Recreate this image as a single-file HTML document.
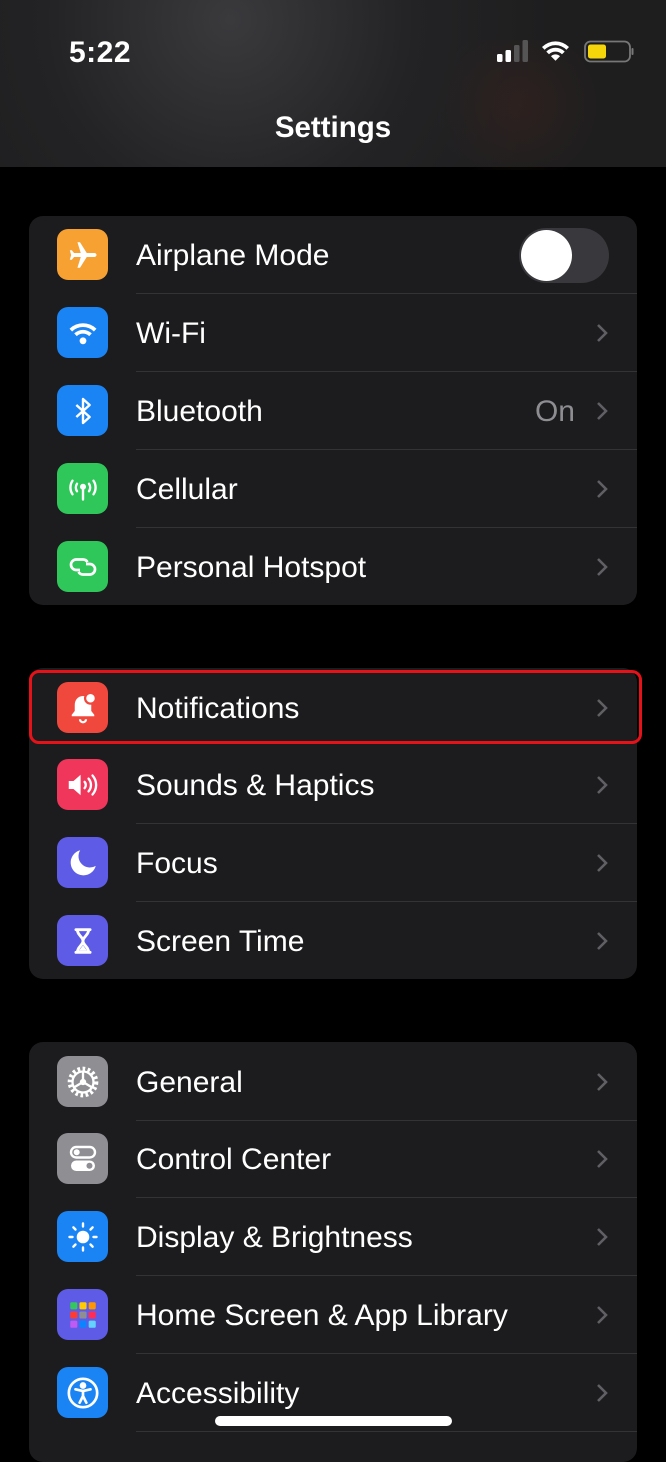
<!DOCTYPE html>
<html><head><meta charset="utf-8"><style>
*{margin:0;padding:0;box-sizing:border-box}
body{width:666px;height:1440px;background:#000;position:relative;overflow:hidden;font-family:"Liberation Sans",sans-serif;color:#fff}
.hdr{position:absolute;left:0;top:0;width:666px;height:167px;background:radial-gradient(circle at 230px 20px,#3a3a3d 0,#232325 40%,#1e1e1f 70%),#1e1e1f}
.hdr2{position:absolute;left:420px;top:40px;width:200px;height:130px;background:radial-gradient(circle,rgba(60,35,30,.5),rgba(0,0,0,0) 70%)}
.time{position:absolute;left:69px;top:36px;font-size:30px;font-weight:bold;letter-spacing:.5px}
.title{position:absolute;left:0;width:666px;text-align:center;top:111px;font-size:29.5px;font-weight:bold}
.grp{position:absolute;left:29px;width:608px;background:#1c1c1e;border-radius:14px}
.row{position:absolute;left:0;width:608px;height:78px}
.ic{position:absolute;left:28px;top:13px;width:51px;height:51px;border-radius:11px;display:flex;align-items:center;justify-content:center}
.lbl{position:absolute;left:107px;top:1px;line-height:78px;font-size:30px}
.sep{position:absolute;left:107px;right:0;bottom:0;height:1px;background:#333336}
.chev{position:absolute;left:566px;top:29px}
.val{position:absolute;right:62px;top:1px;line-height:78px;font-size:30px;color:#8d8d92}
</style></head><body>
<div class="hdr"></div><div class="hdr2"></div>
<div class="time">5:22</div>
<svg style="position:absolute;left:496px;top:39px" width="140" height="26" viewBox="0 0 140 26">
<rect x="1" y="15" width="5.5" height="8" rx="1.5" fill="#fff"/><rect x="9.5" y="11" width="5.5" height="12" rx="1.5" fill="#fff"/><rect x="18" y="6" width="5.5" height="17" rx="1.5" fill="#555"/><rect x="26.5" y="1" width="5.5" height="22" rx="1.5" fill="#555"/>
<path d="M46 8a19 19 0 0 1 27 0l-2.6 2.7a15.3 15.3 0 0 0-21.8 0z" fill="#fff"/><path d="M50.3 12.6a13 13 0 0 1 18.4 0l-2.7 2.7a9.2 9.2 0 0 0-13 0z" fill="#fff"/><path d="M55 17.2a6.5 6.5 0 0 1 9 0l-4.5 4.5z" fill="#fff"/>
<rect x="89" y="2.5" width="45" height="20" rx="5.5" fill="none" stroke="#777" stroke-width="1.8"/><rect x="92" y="5.5" width="18" height="14" rx="2.5" fill="#f5d60a"/><rect x="135.5" y="9" width="2" height="7" rx="1" fill="#777"/>
</svg>
<div class="title">Settings</div>

<div class="grp" style="top:216px;height:389px">
 <div class="row" style="top:0"><div class="ic" style="background:#f7a133"><svg width="36" height="36" viewBox="0 0 24 24"><path d="M21 12c0-.8-.7-1.3-1.5-1.3h-5L10 3.5H8.3l2.2 7.2H6L4.6 8.8H3.2l.9 3.2-.9 3.2h1.4L6 13.3h4.5l-2.2 7.2H10l4.5-7.2h5c.8 0 1.5-.5 1.5-1.3z" fill="#fff"/></svg></div><div class="lbl">Airplane Mode</div>
  <div style="position:absolute;left:490px;top:12px;width:90px;height:55px;border-radius:28px;background:#39393d"><div style="position:absolute;left:2px;top:2px;width:51px;height:51px;border-radius:50%;background:#fff"></div></div><div class="sep"></div></div>
 <div class="row" style="top:78px"><div class="ic" style="background:#1a84f5"><svg width="34" height="34" viewBox="0 0 24 24"><path d="M2.5 9a13.5 13.5 0 0 1 19 0l-1.8 1.9a11 11 0 0 0-15.4 0z" fill="#fff"/><path d="M5.8 12.3a9 9 0 0 1 12.4 0l-1.8 1.9a6.4 6.4 0 0 0-8.8 0z" fill="#fff"/><circle cx="12" cy="17.5" r="2.4" fill="#fff"/></svg></div><div class="lbl">Wi-Fi</div><svg class="chev" width="14" height="20" viewBox="0 0 14 20"><path d="M3 2l8 8-8 8" fill="none" stroke="#5f5f64" stroke-width="2.6"/></svg><div class="sep"></div></div>
 <div class="row" style="top:156px"><div class="ic" style="background:#1a84f5"><svg width="32" height="32" viewBox="0 0 24 24"><path d="M7 7.5l10 9-5 4.5V3l5 4.5-10 9" fill="none" stroke="#fff" stroke-width="1.8" stroke-linejoin="round"/></svg></div><div class="lbl">Bluetooth</div><div class="val">On</div><svg class="chev" width="14" height="20" viewBox="0 0 14 20"><path d="M3 2l8 8-8 8" fill="none" stroke="#5f5f64" stroke-width="2.6"/></svg><div class="sep"></div></div>
 <div class="row" style="top:234px"><div class="ic" style="background:#30c75a"><svg width="36" height="36" viewBox="0 0 24 24" fill="none" stroke="#fff" stroke-width="1.6" stroke-linecap="round"><path d="M5 6.5a8 8 0 0 0 0 9M19 6.5a8 8 0 0 1 0 9M8 8.5a4.5 4.5 0 0 0 0 5M16 8.5a4.5 4.5 0 0 1 0 5M12 11v8"/><circle cx="12" cy="10.5" r="1.2" fill="#fff"/></svg></div><div class="lbl">Cellular</div><svg class="chev" width="14" height="20" viewBox="0 0 14 20"><path d="M3 2l8 8-8 8" fill="none" stroke="#5f5f64" stroke-width="2.6"/></svg><div class="sep"></div></div>
 <div class="row" style="top:312px"><div class="ic" style="background:#30c75a"><svg width="36" height="36" viewBox="0 0 24 24" fill="none" stroke="#fff" stroke-width="1.8"><path d="M10 14H7.5a3.5 3.5 0 0 1 0-7H12a3.5 3.5 0 0 1 3 1.7"/><path d="M14 10h2.5a3.5 3.5 0 0 1 0 7H12a3.5 3.5 0 0 1-3-1.7"/></svg></div><div class="lbl">Personal Hotspot</div><svg class="chev" width="14" height="20" viewBox="0 0 14 20"><path d="M3 2l8 8-8 8" fill="none" stroke="#5f5f64" stroke-width="2.6"/></svg></div>
</div>

<div class="grp" style="top:668px;height:311px">
 <div class="row" style="top:1px"><div class="ic" style="background:#f0483d"><svg width="36" height="36" viewBox="0 0 24 24"><path d="M12 4c-3.5 0-5.5 2.8-5.5 6v4l-2 2.5v1h15v-1l-2-2.5v-4c0-3.2-2-6-5.5-6z" fill="#fff"/><path d="M10 19.5a2 2 0 0 0 4 0" fill="none" stroke="#fff" stroke-width="1.5"/><circle cx="17" cy="5.5" r="3.6" fill="#fff" stroke="#f0483d" stroke-width="1.5"/></svg></div><div class="lbl">Notifications</div><svg class="chev" width="14" height="20" viewBox="0 0 14 20"><path d="M3 2l8 8-8 8" fill="none" stroke="#5f5f64" stroke-width="2.6"/></svg></div>
 <div class="row" style="top:78px"><div class="ic" style="background:#f0365a"><svg width="38" height="38" viewBox="0 0 24 24"><path d="M3 9.5h3l4.5-4v13l-4.5-4H3z" fill="#fff"/><path d="M13 10a3 3 0 0 1 0 4M15.5 8a6 6 0 0 1 0 8M18 6a9 9 0 0 1 0 12" fill="none" stroke="#fff" stroke-width="1.5" stroke-linecap="round"/></svg></div><div class="lbl">Sounds &amp; Haptics</div><svg class="chev" width="14" height="20" viewBox="0 0 14 20"><path d="M3 2l8 8-8 8" fill="none" stroke="#5f5f64" stroke-width="2.6"/></svg><div class="sep"></div></div>
 <div class="row" style="top:156px"><div class="ic" style="background:#5e5ce6"><svg width="34" height="34" viewBox="0 0 24 24"><path d="M10 3a9 9 0 1 0 11 11A8 8 0 0 1 10 3z" fill="#fff"/></svg></div><div class="lbl">Focus</div><svg class="chev" width="14" height="20" viewBox="0 0 14 20"><path d="M3 2l8 8-8 8" fill="none" stroke="#5f5f64" stroke-width="2.6"/></svg><div class="sep"></div></div>
 <div class="row" style="top:234px"><div class="ic" style="background:#5e5ce6"><svg width="34" height="34" viewBox="0 0 24 24"><path d="M7 4h10M7 20h10M8 4c0 4 4 5 4 8s-4 4-4 8M16 4c0 4-4 5-4 8s4 4 4 8" fill="none" stroke="#fff" stroke-width="2" stroke-linecap="round"/><path d="M9 19l3-4 3 4z" fill="#fff"/></svg></div><div class="lbl">Screen Time</div><svg class="chev" width="14" height="20" viewBox="0 0 14 20"><path d="M3 2l8 8-8 8" fill="none" stroke="#5f5f64" stroke-width="2.6"/></svg></div>
</div>
<div style="position:absolute;left:29px;top:670px;width:613px;height:74px;border:3.5px solid #e5121a;border-radius:10px"></div>

<div class="grp" style="top:1042px;height:420px">
 <div class="row" style="top:1px"><div class="ic" style="background:#8e8e93"><svg width="40" height="40" viewBox="0 0 24 24" fill="none" stroke="#fff"><circle cx="12" cy="12" r="8" stroke-width="2.4" stroke-dasharray="1.6 1.5"/><circle cx="12" cy="12" r="6.3" stroke-width="1.4"/><path d="M12 12L12 6M12 12l5 3M12 12l-5 3" stroke-width="1.4"/><circle cx="12" cy="12" r="1.4" fill="#fff"/></svg></div><div class="lbl">General</div><svg class="chev" width="14" height="20" viewBox="0 0 14 20"><path d="M3 2l8 8-8 8" fill="none" stroke="#5f5f64" stroke-width="2.6"/></svg><div class="sep"></div></div>
 <div class="row" style="top:78px"><div class="ic" style="background:#8e8e93"><svg width="36" height="36" viewBox="0 0 24 24"><rect x="4" y="4" width="16" height="7" rx="3.5" fill="none" stroke="#fff" stroke-width="1.6"/><circle cx="7.8" cy="7.5" r="2" fill="#fff"/><rect x="4" y="13" width="16" height="7" rx="3.5" fill="#fff"/><circle cx="16.3" cy="16.5" r="2" fill="#8e8e93"/></svg></div><div class="lbl">Control Center</div><svg class="chev" width="14" height="20" viewBox="0 0 14 20"><path d="M3 2l8 8-8 8" fill="none" stroke="#5f5f64" stroke-width="2.6"/></svg><div class="sep"></div></div>
 <div class="row" style="top:156px"><div class="ic" style="background:#1a84f5"><svg width="36" height="36" viewBox="0 0 24 24"><circle cx="12" cy="12" r="4.2" fill="#fff"/><g stroke="#fff" stroke-width="1.6" stroke-linecap="round"><path d="M12 3v2M12 19v2M3 12h2M19 12h2M5.6 5.6l1.4 1.4M17 17l1.4 1.4M5.6 18.4L7 17M17 7l1.4-1.4"/></g></svg></div><div class="lbl">Display &amp; Brightness</div><svg class="chev" width="14" height="20" viewBox="0 0 14 20"><path d="M3 2l8 8-8 8" fill="none" stroke="#5f5f64" stroke-width="2.6"/></svg><div class="sep"></div></div>
 <div class="row" style="top:234px"><div class="ic" style="background:#5e5ce6"><svg width="34" height="34" viewBox="0 0 24 24"><rect x="3" y="3" width="5" height="5" rx="1" fill="#34c759"/><rect x="9.5" y="3" width="5" height="5" rx="1" fill="#ffcc00"/><rect x="16" y="3" width="5" height="5" rx="1" fill="#ff9500"/><rect x="3" y="9.5" width="5" height="5" rx="1" fill="#ff3b30"/><rect x="9.5" y="9.5" width="5" height="5" rx="1" fill="#8e8e93"/><rect x="16" y="9.5" width="5" height="5" rx="1" fill="#ff2d55"/><rect x="3" y="16" width="5" height="5" rx="1" fill="#bf5af2"/><rect x="9.5" y="16" width="5" height="5" rx="1" fill="#0a84ff"/><rect x="16" y="16" width="5" height="5" rx="1" fill="#64d2ff"/></svg></div><div class="lbl">Home Screen &amp; App Library</div><svg class="chev" width="14" height="20" viewBox="0 0 14 20"><path d="M3 2l8 8-8 8" fill="none" stroke="#5f5f64" stroke-width="2.6"/></svg><div class="sep"></div></div>
 <div class="row" style="top:312px"><div class="ic" style="background:#1a84f5"><svg width="40" height="40" viewBox="0 0 24 24" fill="none" stroke="#fff" stroke-width="1.6" stroke-linecap="round"><circle cx="12" cy="12" r="8.5"/><circle cx="12" cy="7.5" r="1.2" fill="#fff"/><path d="M7.5 9.8l4.5 1 4.5-1M12 10.8v3M12 13.8l-2 4M12 13.8l2 4"/></svg></div><div class="lbl">Accessibility</div><svg class="chev" width="14" height="20" viewBox="0 0 14 20"><path d="M3 2l8 8-8 8" fill="none" stroke="#5f5f64" stroke-width="2.6"/></svg><div class="sep"></div></div>
</div>
<div style="position:absolute;left:215px;top:1416px;width:237px;height:10px;border-radius:5px;background:#fff"></div>
</body></html>
